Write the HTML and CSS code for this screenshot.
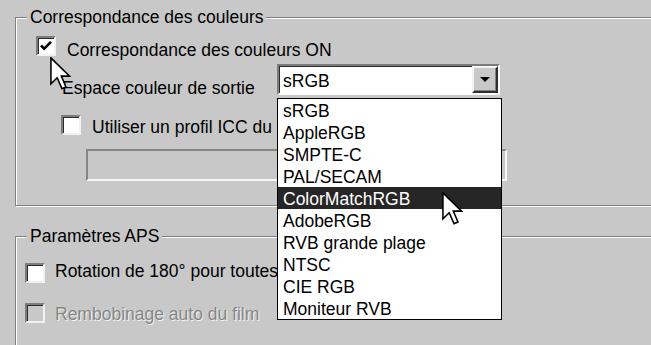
FILE: index.html
```html
<!DOCTYPE html>
<html lang="fr">
<head>
    <meta charset="UTF-8">
    <title>Préférences</title>
    <link rel="stylesheet" href="styles.css">
</head>
<body>
    <div class="dialog">
        <!-- Correspondance des couleurs -->
        <fieldset class="group group-color">
            <legend>Correspondance des couleurs</legend>
            <div class="row row-match">
                <span class="check">
                    <svg width="16" height="16" viewBox="0 0 16 16"><polyline points="3,7.5 6.2,10.7 13,3.8" fill="none" stroke="#000" stroke-width="2.6"/></svg>
                </span>
                <span class="label">Correspondance des couleurs ON</span>
            </div>
            <div class="row row-space">
                <span class="label label-space">Espace couleur de sortie</span>
                <div class="combo">
                    <span class="combo-value">sRGB</span>
                    <span class="combo-btn"><span class="arrow"></span></span>
                    <ul class="combo-list">
                        <li>sRGB</li>
                        <li>AppleRGB</li>
                        <li>SMPTE-C</li>
                        <li>PAL/SECAM</li>
                        <li class="selected">ColorMatchRGB</li>
                        <li>AdobeRGB</li>
                        <li>RVB grande plage</li>
                        <li>NTSC</li>
                        <li>CIE RGB</li>
                        <li>Moniteur RVB</li>
                    </ul>
                </div>
            </div>
            <div class="row row-icc">
                <span class="check"></span>
                <span class="label label-cut">Utiliser un profil ICC du moniteur</span>
            </div>
            <div class="path-field"></div>
        </fieldset>

        <!-- Paramètres APS -->
        <fieldset class="group group-aps">
            <legend>Paramètres APS</legend>
            <div class="row row-rotate">
                <span class="check"></span>
                <span class="label label-cut">Rotation de 180° pour toutes les vues</span>
            </div>
            <div class="row row-rewind">
                <span class="check check-disabled"></span>
                <span class="label label-disabled">Rembobinage auto du film</span>
            </div>
        </fieldset>

        <!-- Curseurs -->
        <svg class="cursor cursor-a" width="21" height="33" viewBox="0 0 12.6 20">
            <path d="M0.5 0.5 V16.3 L4.3 12.6 L7.2 19.2 L9.6 18.2 L6.8 11.6 L11.8 11.6 Z" fill="#fff" stroke="#000" stroke-width="0.95" stroke-linejoin="miter"/>
        </svg>
        <svg class="cursor cursor-b" width="21" height="33" viewBox="0 0 12.6 20">
            <path d="M0.5 0.5 V16.3 L4.3 12.6 L7.2 19.2 L9.6 18.2 L6.8 11.6 L11.8 11.6 Z" fill="#fff" stroke="#000" stroke-width="0.95" stroke-linejoin="miter"/>
        </svg>
    </div>
</body>
</html>
```

FILE: styles.css
```css
/* Globalne */
body {
    margin: 0;
    background: #c8c8c8;
    font-family: "Liberation Sans", Arial, sans-serif;
    font-size: 17.5px;
    color: #000;
    overflow: hidden;
    height: 345px;
}

.dialog {
    position: relative;
    height: 345px;
    overflow: hidden;
    padding: 7px 0 0 15px;
    box-sizing: border-box;
}

/* Cadres */
.group {
    margin: 0;
    width: 700px;
    min-width: 0;
    border: 1px solid #808080;
    box-shadow: inset 1px 1px 0 #fff, 1px 1px 0 #fff;
}

.group legend {
    padding: 0 3px;
    line-height: 20px;
    background: #c8c8c8;
}

.group-color {
    padding: 0 0 24px 20px;
}

.group-color legend {
    margin-left: -9px;
}

.group-aps {
    margin-top: 20px;
    padding: 0 0 40px 9px;
}

.group-aps legend {
    margin-left: 2px;
}

/* Lignes */
.row {
    display: flex;
    align-items: flex-start;
    white-space: nowrap;
}

.label {
    line-height: 20px;
}

.label-cut {
    overflow: hidden;
}

.row-match {
    margin-top: 9px;
}

.row-match .label {
    margin: 4px 0 0 11px;
}

.row-space {
    margin-top: 4px;
    padding-left: 26px;
}

.label-space {
    flex: none;
    width: 215px;
    margin-top: 14px;
}

.row-icc {
    margin-top: 17px;
    padding-left: 25px;
}

.row-icc .label {
    margin: 2px 0 0 11px;
    max-width: 185px;
}

.path-field {
    margin: 12px 0 0 50px;
    width: 421px;
    height: 32px;
    box-sizing: border-box;
    border: 2px solid;
    border-color: #858585 #f6f6f6 #f6f6f6 #858585;
}

.row-rotate {
    margin-top: 15px;
}

.row-rotate .check {
    margin-top: 2px;
}

.row-rotate .label {
    margin-left: 10px;
    max-width: 222px;
}

.row-rewind {
    margin-top: 20px;
}

.row-rewind .label {
    margin: 1px 0 0 10px;
}

.label-disabled {
    color: #878787;
    text-shadow: 1px 1px 0 #f2f2f2;
}

/* Cases à cocher */
.check {
    flex: none;
    width: 20px;
    height: 20px;
    box-sizing: border-box;
    border: 2px solid;
    border-color: #7c7c7c #f2f2f2 #f2f2f2 #7c7c7c;
    box-shadow: inset 1px 1px 0 #2c2c2c;
    background: #fff;
    display: flex;
}

.check-disabled {
    background: #c8c8c8;
}

/* Liste déroulante */
.combo {
    position: relative;
    flex: none;
    width: 223px;
    height: 31px;
    box-sizing: border-box;
    border: 2px solid;
    border-color: #7c7c7c #fafafa #fafafa #7c7c7c;
    box-shadow: inset 1px 1px 0 #2c2c2c;
    background: #fff;
    display: flex;
}

.combo-value {
    flex: 1;
    padding: 3px 0 0 4px;
    line-height: 24px;
}

.combo-btn {
    width: 26px;
    box-sizing: border-box;
    border: 2px solid;
    border-color: #f4f4f4 #303030 #303030 #f4f4f4;
    box-shadow: inset -1px -1px 0 #808080;
    background: #c8c8c8;
    display: flex;
    align-items: center;
    justify-content: center;
}

.arrow {
    width: 0;
    height: 0;
    border-left: 5px solid transparent;
    border-right: 5px solid transparent;
    border-top: 5px solid #000;
}

.combo-list {
    position: absolute;
    left: -2px;
    top: 32px;
    width: 225px;
    box-sizing: border-box;
    margin: 0;
    padding: 0;
    list-style: none;
    background: #fff;
    border: 1px solid #000;
    z-index: 5;
}

.combo-list li {
    height: 22px;
    line-height: 22px;
    padding: 1px 0 0 5px;
    box-sizing: border-box;
}

.combo-list li.selected {
    background: #262626;
    color: #fff;
}

/* Curseurs */
.cursor {
    position: absolute;
    z-index: 10;
}

.cursor-a {
    left: 50px;
    top: 57px;
}

.cursor-b {
    left: 442px;
    top: 192px;
}
```
